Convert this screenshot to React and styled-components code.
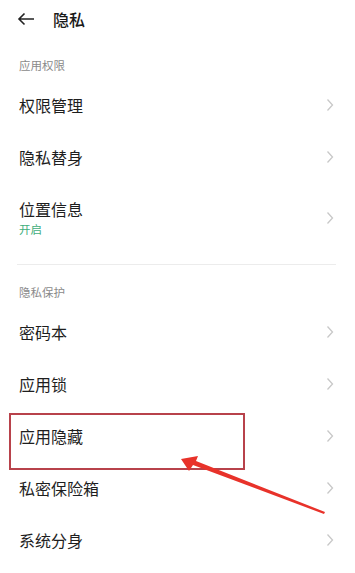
import React from 'react';
import styled, { createGlobalStyle } from 'styled-components';

const GlobalStyle = createGlobalStyle`
    body {
        margin: 0;
        background: #ffffff;
        font-family: "Noto Sans CJK SC", "Noto Sans", sans-serif;
    }
`;

const sections = [
    {
        title: '应用权限',
        items: [
            { label: '权限管理' },
            { label: '隐私替身' },
            { label: '位置信息', sub: '开启' },
        ],
    },
    {
        title: '隐私保护',
        items: [
            { label: '密码本' },
            { label: '应用锁' },
            { label: '应用隐藏', marked: true },
            { label: '私密保险箱' },
            { label: '系统分身' },
        ],
    },
];

const Chevron = () => (
    <ChevronIcon width="8" height="14" viewBox="0 0 8 14">
        <polyline points="1.5,1.5 6.5,7 1.5,12.5" fill="none" stroke="#c8c8c8" strokeWidth="1.3" />
    </ChevronIcon>
);

function App() {
    return (
        <Page>
            <GlobalStyle />
            <Header>
                <BackArrow width="18" height="14" viewBox="0 0 18 14">
                    <path d="M17 7H2M7.5 1.5L2 7l5.5 5.5" fill="none" stroke="#222" strokeWidth="1.6" />
                </BackArrow>
                <Title>隐私</Title>
            </Header>
            {sections.map((section, si) => (
                <Section key={si}>
                    {si > 0 && <Divider />}
                    <SectionLabel>{section.title}</SectionLabel>
                    {section.items.map((item, i) => (
                        <Row key={i} $tall={!!item.sub}>
                            {item.marked && <MarkBox />}
                            <RowText>
                                <RowLabel>{item.label}</RowLabel>
                                {item.sub && <RowSub>{item.sub}</RowSub>}
                            </RowText>
                            <Chevron />
                        </Row>
                    ))}
                </Section>
            ))}
            <Annotation width="355" height="573" viewBox="0 0 355 573">
                <polygon
                    points="181,459 198,456 196,461 325,512 324,514 193,465 189,471"
                    fill="#e8322a"
                />
            </Annotation>
        </Page>
    );
}

const Page = styled.div`
    position: relative;
    width: 355px;
    height: 573px;
    overflow: hidden;
    background: #ffffff;
`;

const Header = styled.div`
    display: flex;
    align-items: center;
    height: 38px;
    padding-left: 17px;
`;

const BackArrow = styled.svg`
    display: block;
`;

const Title = styled.span`
    margin-left: 18px;
    font-size: 16px;
    color: #1a1a1a;
    font-weight: 500;
`;

const Section = styled.div`
    display: flex;
    flex-direction: column;
`;

const Divider = styled.div`
    height: 1px;
    margin: 12px 19px 0 17px;
    background: #ececec;
`;

const SectionLabel = styled.div`
    padding: 19px 19px 6px;
    font-size: 11.5px;
    line-height: 16px;
    color: #8a8a8a;
`;

const Row = styled.div`
    position: relative;
    display: flex;
    align-items: center;
    justify-content: space-between;
    height: ${p => (p.$tall ? '69px' : '52px')};
    padding: 0 21px 0 19px;
`;

const RowText = styled.div`
    display: flex;
    flex-direction: column;
    gap: 3px;
`;

const RowLabel = styled.span`
    font-size: 16px;
    line-height: 20px;
    color: #1e1e1e;
`;

const RowSub = styled.span`
    font-size: 11.5px;
    line-height: 14px;
    color: #3fae7c;
`;

const ChevronIcon = styled.svg`
    display: block;
`;

const MarkBox = styled.div`
    position: absolute;
    left: 9px;
    top: 3px;
    width: 236px;
    height: 57px;
    box-sizing: border-box;
    border: 2px solid #b8424b;
`;

const Annotation = styled.svg`
    position: absolute;
    left: 0;
    top: 0;
    pointer-events: none;
`;

export default App;
